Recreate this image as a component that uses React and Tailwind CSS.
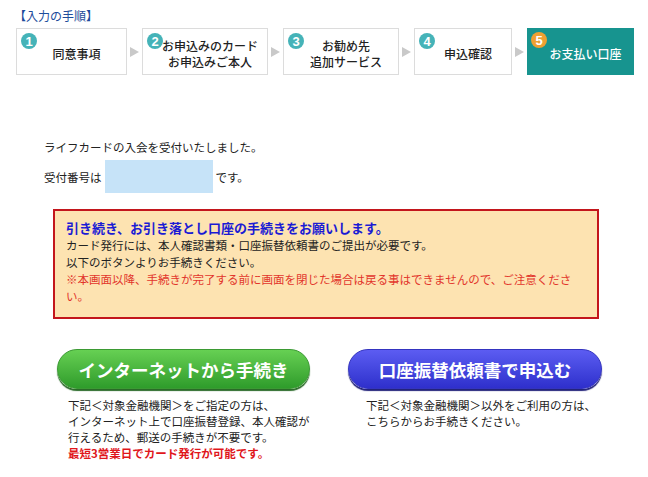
import React from "react";

const steps = [
    { no: "1", w: "w-[111px]", lines: ["同意事項"] },
    { no: "2", w: "w-[126px]", lines: ["お申込みのカード", "お申込みご本人"] },
    { no: "3", w: "w-[116px]", lines: ["お勧め先", "追加サービス"] },
    { no: "4", w: "w-[98px]", lines: ["申込確認"] },
    { no: "5", w: "w-[107px]", lines: ["お支払い口座"], active: true },
];

function Arrow() {
    return (
        <div className="flex w-[15px] justify-center">
            <div className="h-0 w-0 border-y-[5px] border-l-[9px] border-y-transparent border-l-[#c9c9c9]" />
        </div>
    );
}

function Step({ step }) {
    return (
        <div
            className={
                step.active
                    ? `relative flex h-[47px] ${step.w} items-center justify-center bg-[#17948f] pl-[10px] pt-[4px] text-white`
                    : `relative flex h-[47px] ${step.w} items-center justify-center border border-[#dcdcdc] bg-white pl-[10px] pt-[4px] text-[#222]`
            }
        >
            <div
                className={
                    step.active
                        ? "absolute left-[4px] top-[4px] flex h-[16px] w-[16px] items-center justify-center rounded-full bg-[#eea032] font-['Liberation_Sans',sans-serif] text-[13px] font-bold leading-none text-white"
                        : "absolute left-[4px] top-[4px] flex h-[16px] w-[16px] items-center justify-center rounded-full bg-[#45b3b8] font-['Liberation_Sans',sans-serif] text-[13px] font-bold leading-none text-white"
                }
            >
                {step.no}
            </div>
            <div className="text-center text-[12px] font-medium leading-[16px]">
                {step.lines.map((l) => (
                    <div key={l}>{l}</div>
                ))}
            </div>
        </div>
    );
}

export default function App() {
    return (
        <div className="h-[477px] w-[648px] overflow-hidden bg-white font-['Noto_Sans_CJK_JP','Liberation_Sans',sans-serif] text-[#222]">
            <p className="pl-[14px] pt-[8px] text-[12px] leading-[16px] text-[#1d4c9b]">【入力の手順】</p>

            <div className="mt-[4px] flex items-center pl-[16px]">
                {steps.map((s, i) => (
                    <React.Fragment key={s.no}>
                        {i > 0 && <Arrow />}
                        <Step step={s} />
                    </React.Fragment>
                ))}
            </div>

            <div className="mt-[64px] pl-[44px] text-[11.5px] leading-[16px]">
                <p>ライフカードの入会を受付いたしました。</p>
                <div className="mt-[5px] flex items-center">
                    <span>受付番号は</span>
                    <span className="mx-[3px] h-[33px] w-[108px] bg-[#c6e3f8]" />
                    <span>です。</span>
                </div>
            </div>

            <div className="ml-[53px] mt-[16px] h-[110px] w-[546px] border-2 border-[#c3161c] bg-[#fde3b1] pl-[11px] pt-[8px]">
                <p className="text-[13px] font-bold leading-[18px] text-[#1b1bd4]">
                    引き続き、お引き落とし口座の手続きをお願いします。
                </p>
                <div className="text-[11.5px] leading-[17px]">
                    <p>カード発行には、本人確認書類・口座振替依頼書のご提出が必要です。</p>
                    <p>以下のボタンよりお手続きください。</p>
                    <p className="text-[#e2352b]">
                        ※本画面以降、手続きが完了する前に画面を閉じた場合は戻る事はできませんので、ご注意くださ
                        <br />
                        い。
                    </p>
                </div>
            </div>

            <div className="ml-[57px] mt-[30px] flex gap-[38px]">
                <div className="w-[253px]">
                    <div className="flex h-[40px] items-center justify-center rounded-[20px] border border-[#3b9a33] bg-gradient-to-b from-[#66d053] to-[#2e9c2b] pt-[2px] text-[17.5px] font-bold text-white shadow-[0_2px_1px_#2a6a28]">
                        インターネットから手続き
                    </div>
                    <div className="mt-[8px] pl-[11px] text-[11.5px] leading-[16px]">
                        <p>下記＜対象金融機関＞をご指定の方は、</p>
                        <p>インターネット上で口座振替登録、本人確認が</p>
                        <p>行えるため、郵送の手続きが不要です。</p>
                        <p className="font-bold text-[#e0161b]">最短3営業日でカード発行が可能です。</p>
                    </div>
                </div>
                <div className="w-[254px]">
                    <div className="flex h-[40px] items-center justify-center rounded-[20px] border border-[#3434c0] bg-gradient-to-b from-[#5c5cf2] to-[#2f2fcc] pt-[2px] text-[17.5px] font-bold text-white shadow-[0_2px_1px_#23237a]">
                        口座振替依頼書で申込む
                    </div>
                    <div className="mt-[8px] pl-[18px] text-[11.5px] leading-[16px]">
                        <p>下記＜対象金融機関＞以外をご利用の方は、</p>
                        <p>こちらからお手続きください。</p>
                    </div>
                </div>
            </div>
        </div>
    );
}
